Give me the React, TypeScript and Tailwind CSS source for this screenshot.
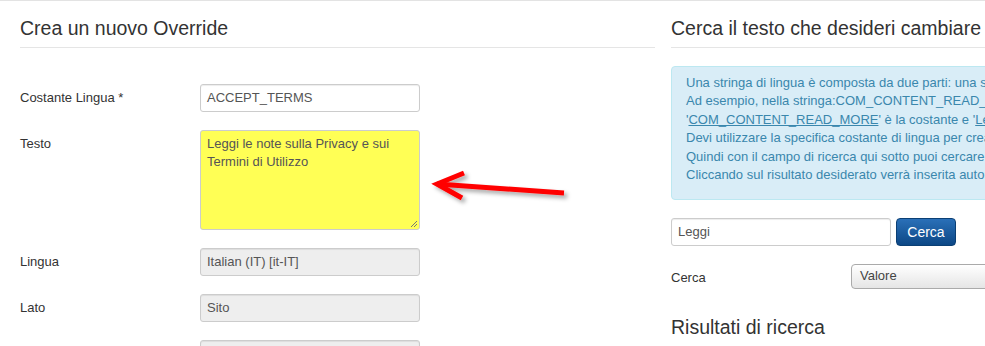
import React from 'react';

const font = { fontFamily: '"Liberation Sans", Arial, sans-serif' };

function Row({ label, children }: { label: string; children: React.ReactNode }) {
  return (
    <div className="flex items-start">
      <div className="w-[180px] shrink-0 pt-[5px] text-[13px] leading-[18px] text-[#333]">{label}</div>
      {children}
    </div>
  );
}

function Field({ value, disabled }: { value: string; disabled?: boolean }) {
  return (
    <div
      className={`w-[220px] h-[28px] shrink-0 rounded-[3px] border border-[#ccc] px-[6px] text-[13px] leading-[26px] text-[#555] shadow-[inset_0_1px_1px_rgba(0,0,0,0.075)] ${
        disabled ? 'bg-[#eee]' : 'bg-white'
      }`}
    >
      {value}
    </div>
  );
}

export default function App() {
  return (
    <div style={font} className="relative w-[985px] h-[346px] overflow-hidden bg-white border-t border-[#e3e3e3]">
      <div className="flex gap-[16px] pl-[20px] pt-[15px]">
        {/* Left column */}
        <div className="w-[635px] shrink-0">
          <h2 className="text-[19.5px] leading-[24px] text-[#333] pb-[7px] border-b border-[#e5e5e5]">
            Crea un nuovo Override
          </h2>
          <div className="flex flex-col gap-[18px] pt-[36px]">
            <Row label="Costante Lingua *">
              <Field value="ACCEPT_TERMS" />
            </Row>
            <Row label="Testo">
              <div className="relative w-[220px] h-[100px] shrink-0 rounded-[3px] border border-[#ccc] bg-[#ffff55] px-[6px] pt-[4px] text-[13px] leading-[18px] text-[#555]">
                Leggi le note sulla Privacy e sui Termini di Utilizzo
                <svg className="absolute right-[1px] bottom-[1px]" width="8" height="8" viewBox="0 0 8 8">
                  <path d="M7 1L1 7M7 4L4 7" stroke="#777" strokeWidth="1" />
                </svg>
              </div>
            </Row>
            <Row label="Lingua">
              <Field value="Italian (IT) [it-IT]" disabled />
            </Row>
            <Row label="Lato">
              <Field value="Sito" disabled />
            </Row>
            <Row label="">
              <Field value="" disabled />
            </Row>
          </div>
        </div>

        {/* Right column */}
        <div className="w-[640px] shrink-0">
          <h2 className="text-[19.5px] leading-[24px] text-[#333] pb-[7px] border-b border-[#e5e5e5] whitespace-nowrap">
            Cerca il testo che desideri cambiare
          </h2>
          <div className="mt-[18px] rounded-[4px] border border-[#bce8f1] bg-[#d9edf7] pl-[14px] pt-[7px] pb-[15px] text-[13px] leading-[18.4px] text-[#3a87ad] whitespace-nowrap">
            <div>Una stringa di lingua è composta da due parti: una specifica costante di lingua e il suo valore.</div>
            <div>Ad esempio, nella stringa:COM_CONTENT_READ_MORE="Leggi tutto..."</div>
            <div>
              '<span className="underline">COM_CONTENT_READ_MORE</span>' è la costante e '
              <span className="underline">Leggi tutto...</span>' è il valore.
            </div>
            <div>Devi utilizzare la specifica costante di lingua per creare un override del valore.</div>
            <div>Quindi con il campo di ricerca qui sotto puoi cercare la costante o il valore che vuoi cambiare.</div>
            <div>Cliccando sul risultato desiderato verrà inserita automaticamente la costante nel modulo.</div>
          </div>

          <div className="mt-[18px] flex gap-[5px]">
            <Field value="Leggi" />
            <button className="w-[60px] h-[28px] rounded-[4px] border border-[#0b3f74] bg-gradient-to-b from-[#2a70b8] to-[#0c4886] text-[14px] text-white">
              Cerca
            </button>
          </div>

          <div className="mt-[18px] flex items-center">
            <div className="w-[180px] shrink-0 text-[13px] text-[#333] pt-[2px]">Cerca</div>
            <div className="w-[220px] h-[25px] shrink-0 rounded-[4px] border border-[#aaa] bg-gradient-to-b from-white to-[#e5e5e5] px-[8px] text-[13px] leading-[22px] text-[#444]">
              Valore
            </div>
          </div>

          <h3 className="mt-[26px] text-[19.5px] leading-[24px] text-[#333]">Risultati di ricerca</h3>
        </div>
      </div>

      {/* annotation arrow */}
      <svg className="absolute left-[425px] top-[160px]" width="160" height="50" viewBox="0 0 160 50">
        <defs>
          <filter id="sh" x="-20%" y="-50%" width="140%" height="200%">
            <feDropShadow dx="3" dy="3" stdDeviation="2" floodColor="#000" floodOpacity="0.35" />
          </filter>
        </defs>
        <g filter="url(#sh)" stroke="#ff0000" strokeWidth="5" fill="none" strokeLinecap="butt">
          <path d="M12 23L139 32" />
          <path d="M39 12L12 23L37 37" strokeLinejoin="miter" />
        </g>
      </svg>
    </div>
  );
}
